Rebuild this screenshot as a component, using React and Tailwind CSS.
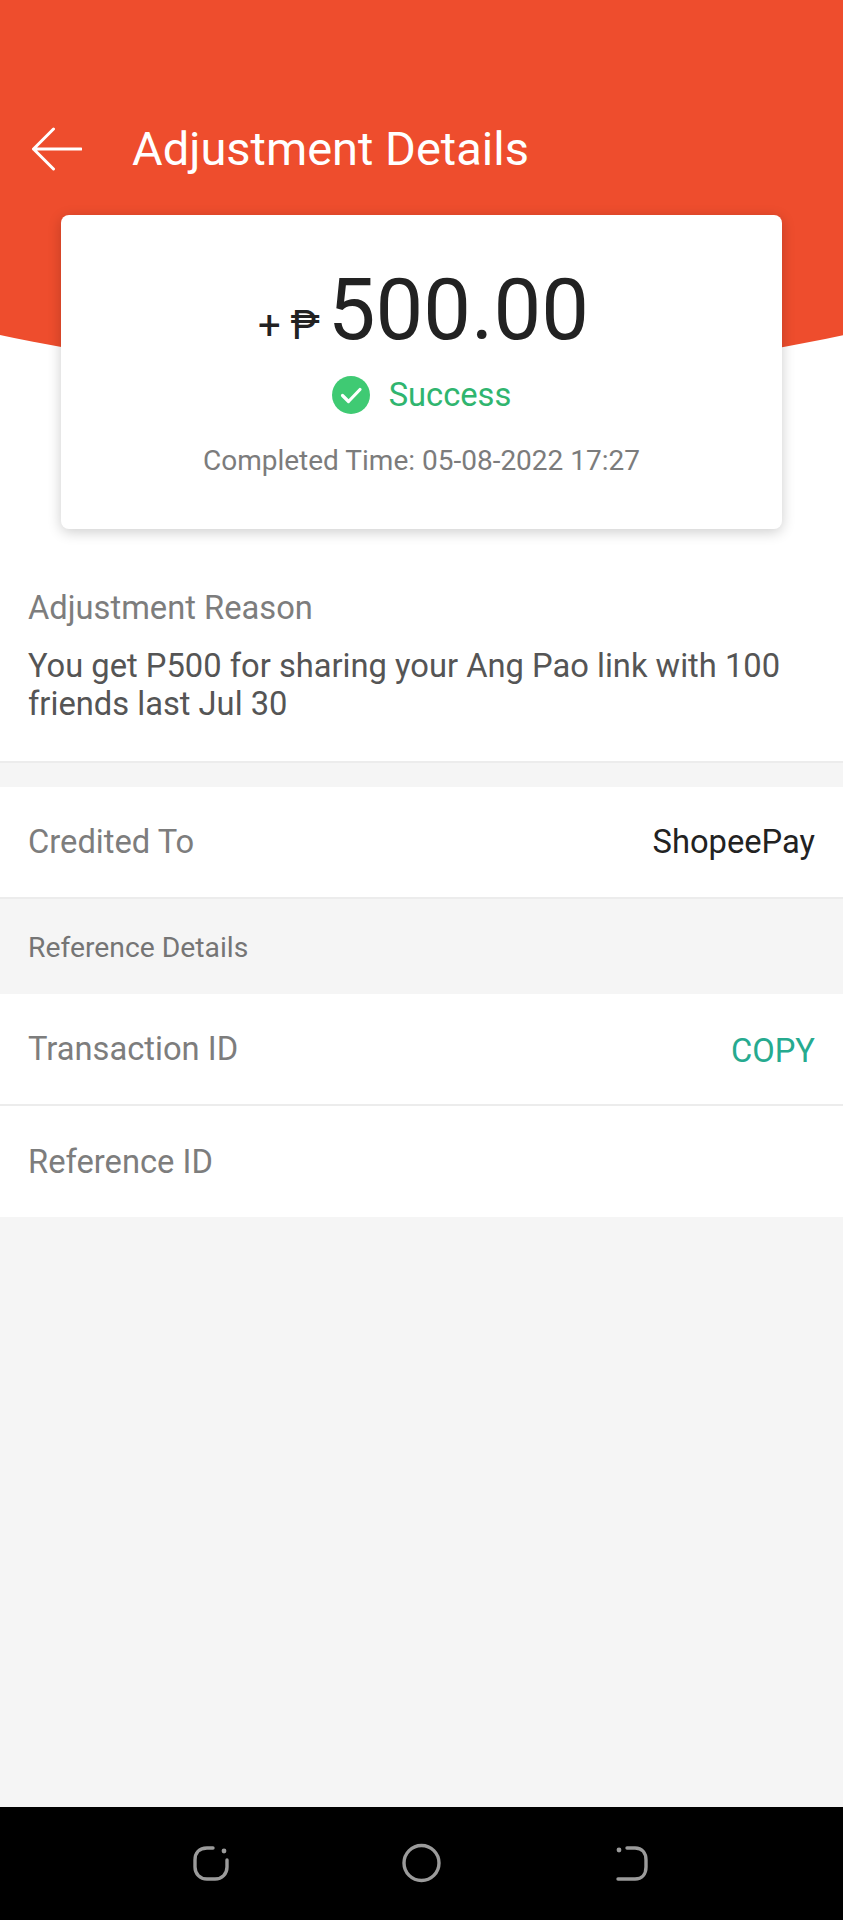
export default function App() {
  return (
    <div className="relative flex h-[1920px] w-full flex-col overflow-hidden bg-[#f5f5f5] font-['Roboto',sans-serif]">
      <div className="absolute inset-x-0 top-0 h-[600px] bg-white" />
      <div className="absolute inset-x-0 top-0 h-[380px] overflow-hidden">
        <div className="absolute bottom-0 left-[calc(50%-2000px)] h-[4000px] w-[4000px] rounded-full bg-[#ee4d2d]" />
      </div>

      <div className="relative flex h-[215px] shrink-0 items-start pl-[32px] pt-[126px]">
        <svg width="50" height="46" viewBox="0 0 50 46" fill="none" stroke="#fff" strokeWidth="3" strokeLinecap="round" strokeLinejoin="round" className="shrink-0">
          <path d="M1.5 23H49M21.5 3 1.5 23l20 20" />
        </svg>
        <h1 className="ml-[50px] text-[47px] font-normal leading-[46px] text-white">Adjustment Details</h1>
      </div>

      <div className="relative z-10 mx-auto flex h-[314px] w-[721px] shrink-0 flex-col items-center rounded-[8px] bg-white pt-[51px] shadow-[0_3px_14px_rgba(0,0,0,0.2)]">
        <div className="flex h-[88px] items-baseline justify-center">
          <span className="pl-[4px] text-[40px] leading-[88px] text-[#222]">+ ₱</span>
          <span className="ml-[8px] text-[85px] leading-[88px] text-[#222]">500.00</span>
        </div>
        <div className="mt-[22px] flex h-[38px] items-center">
          <svg width="38" height="38" viewBox="0 0 38 38" className="shrink-0">
            <circle cx="19" cy="19" r="19" fill="#3fca73" />
            <path d="M10.5 19.5 16.5 25.5 28 13.5" fill="none" stroke="#fff" strokeWidth="3.2" strokeLinecap="round" strokeLinejoin="round" />
          </svg>
          <span className="ml-[19px] text-[32.7px] leading-[38px] text-[#30b56f]">Success</span>
        </div>
        <p className="mt-[29px] text-[28px] leading-[36px] text-[#7c7c7c]">Completed Time: 05-08-2022 17:27</p>
      </div>

      <div className="relative flex h-[234px] shrink-0 flex-col border-b-2 border-[#ececec] bg-white px-[28px] pt-[60px]">
        <p className="text-[32.7px] leading-[38px] text-[#7d7d7d]">Adjustment Reason</p>
        <p className="mt-[20px] text-[32.7px] leading-[38px] text-[#555]">You get P500 for sharing your Ang Pao link with 100<br />friends last Jul 30</p>
      </div>

      <div className="h-[24px] shrink-0" />

      <div className="relative flex h-[112px] shrink-0 items-center justify-between border-b-2 border-[#ececec] bg-white px-[28px]">
        <span className="text-[32.7px] leading-[38px] text-[#7d7d7d]">Credited To</span>
        <span className="text-[32.7px] leading-[38px] text-[#222]">ShopeePay</span>
      </div>

      <div className="flex h-[95px] shrink-0 items-center px-[28px] pt-[3px]">
        <span className="text-[28.3px] leading-[36px] text-[#757575]">Reference Details</span>
      </div>

      <div className="relative flex h-[112px] shrink-0 items-center justify-between border-b-2 border-[#ececec] bg-white px-[28px]">
        <span className="text-[32.7px] leading-[38px] text-[#7d7d7d]">Transaction ID</span>
        <span className="mt-[4px] text-[32.7px] leading-[38px] text-[#26aa8f]">COPY</span>
      </div>

      <div className="flex h-[111px] shrink-0 items-center bg-white px-[28px]">
        <span className="text-[32.7px] leading-[38px] text-[#7d7d7d]">Reference ID</span>
      </div>

      <div className="flex-1" />

      <div className="relative h-[113px] shrink-0 bg-black">
        <svg width="843" height="44" viewBox="0 0 843 44" fill="none" stroke="#9b9b9b" strokeWidth="3.4" strokeLinecap="round" className="absolute left-0 top-[34px]">
          <path d="M213 7H207C199 7 195 12 195 19V26C195 33 200 38 207 38H215C222 38 227 33 227 26V19" />
          <circle cx="224" cy="10" r="2.4" fill="#9b9b9b" stroke="none" />
          <circle cx="421.5" cy="22" r="17.5" />
          <path d="M627 7H635C642 7 646 12 646 19V26C646 33 642 38 635 38H618" />
          <circle cx="619" cy="9" r="2.4" fill="#9b9b9b" stroke="none" />
        </svg>
      </div>
    </div>
  );
}
